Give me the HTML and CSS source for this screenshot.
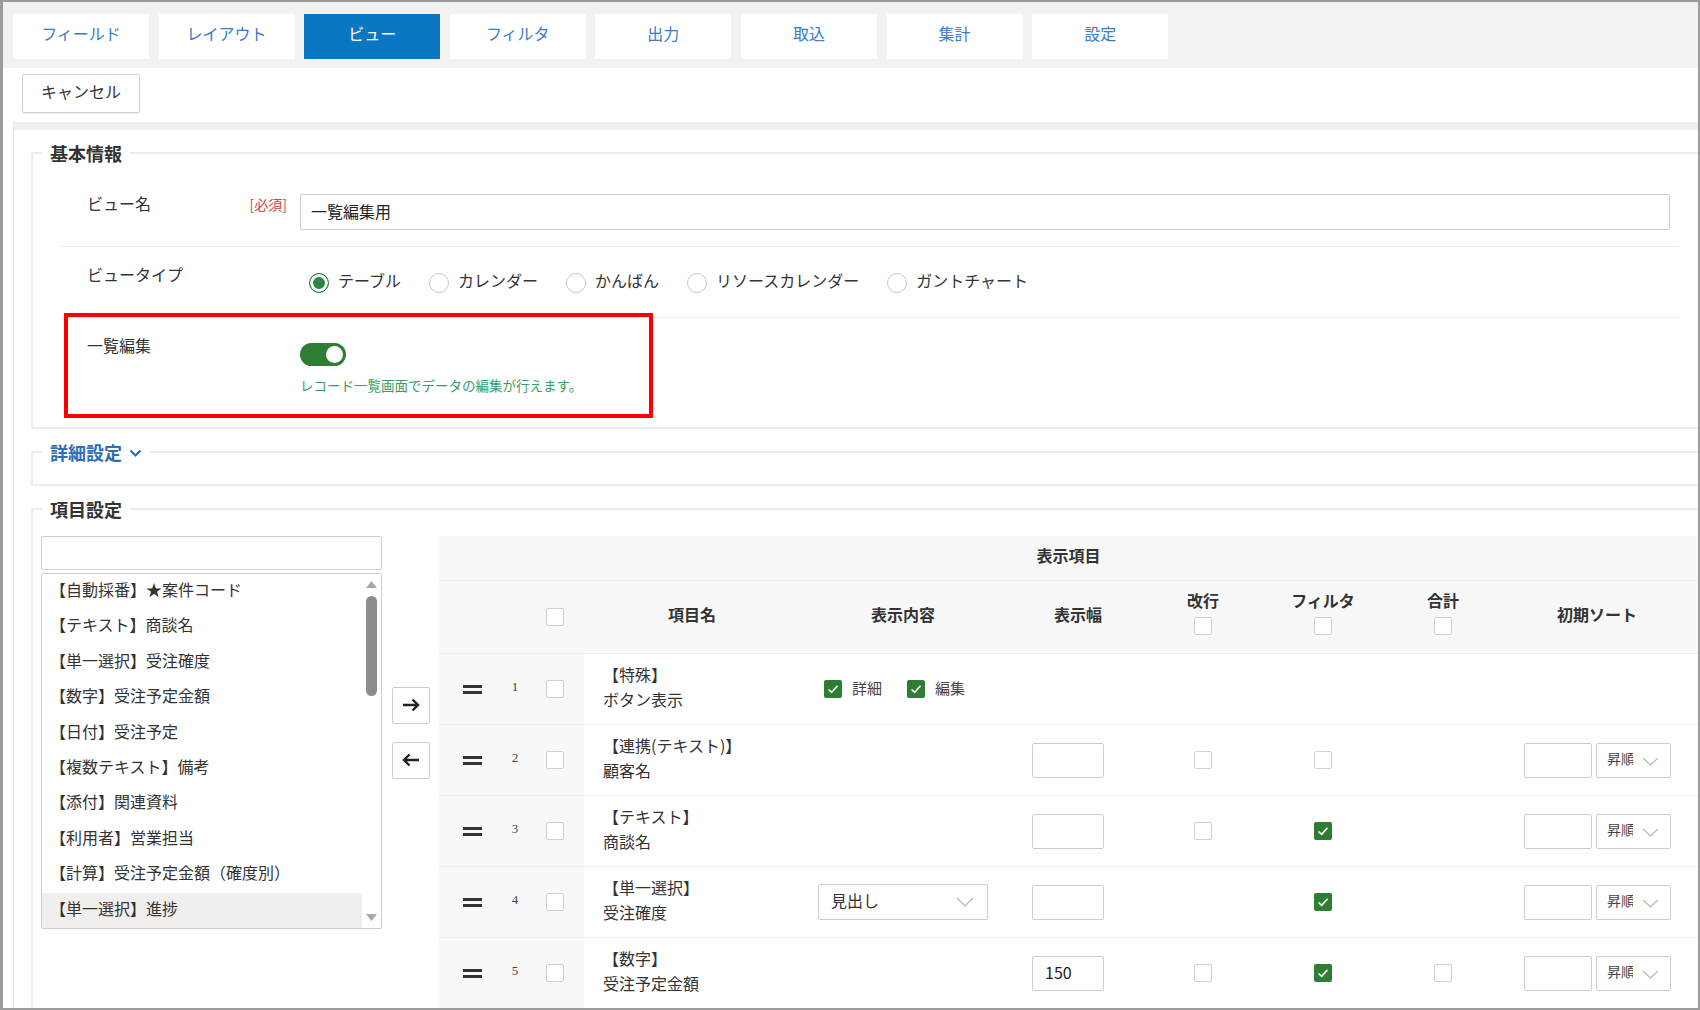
FILE: index.html
```html
<!DOCTYPE html>
<html lang="ja">
<head>
<meta charset="utf-8">
<title>ビュー設定</title>
<link rel="stylesheet" href="styles.css">
</head>
<body>
<div class="window">
  <nav class="tabs">
    <div class="tab">フィールド</div>
    <div class="tab">レイアウト</div>
    <div class="tab active">ビュー</div>
    <div class="tab">フィルタ</div>
    <div class="tab">出力</div>
    <div class="tab">取込</div>
    <div class="tab">集計</div>
    <div class="tab">設定</div>
  </nav>
  <div class="toolbar"><button class="btn">キャンセル</button></div>

  <div class="panel">
    <fieldset class="group">
      <legend>基本情報</legend>
      <div class="frow name">
        <div class="flabel"><span>ビュー名</span><span class="req">[必須]</span></div>
        <div class="fcontent"><input class="text" type="text" value="一覧編集用"></div>
      </div>
      <div class="frow type">
        <div class="flabel"><span>ビュータイプ</span></div>
        <div class="fcontent">
          <div class="radios">
            <label class="ropt"><span class="radio on"></span><span class="rtext">テーブル</span></label>
            <label class="ropt"><span class="radio"></span><span class="rtext">カレンダー</span></label>
            <label class="ropt"><span class="radio"></span><span class="rtext">かんばん</span></label>
            <label class="ropt"><span class="radio"></span><span class="rtext">リソースカレンダー</span></label>
            <label class="ropt"><span class="radio"></span><span class="rtext">ガントチャート</span></label>
          </div>
        </div>
      </div>
      <div class="frow bulk">
        <div class="flabel"><span>一覧編集</span></div>
        <div class="fcontent">
          <div class="toggle"><span class="knob"></span></div>
          <p class="help">レコード一覧画面でデータの編集が行えます。</p>
        </div>
        <div class="annot"></div>
      </div>
    </fieldset>

    <fieldset class="group">
      <legend class="link">詳細設定<svg class="chev" width="13" height="9" viewBox="0 0 13 9"><path d="M1.5 1.5 L6.5 6.5 L11.5 1.5" fill="none" stroke="#2f6db5" stroke-width="2.2"/></svg></legend>
      <div class="collapsed"></div>
    </fieldset>

    <fieldset class="group">
      <legend>項目設定</legend>
      <div class="items">
        <div class="picker">
          <div class="leftcol">
            <input class="search" type="text" value="">
            <div class="list">
              <ul class="opts">
                <li>【自動採番】★案件コード</li>
                <li>【テキスト】商談名</li>
                <li>【単一選択】受注確度</li>
                <li>【数字】受注予定金額</li>
                <li>【日付】受注予定</li>
                <li>【複数テキスト】備考</li>
                <li>【添付】関連資料</li>
                <li>【利用者】営業担当</li>
                <li>【計算】受注予定金額（確度別）</li>
                <li class="sel">【単一選択】進捗</li>
              </ul>
              <div class="sbar">
                <svg width="11" height="7" viewBox="0 0 11 7"><polygon points="5.5,0 11,7 0,7" fill="#a8a8a8"/></svg>
                <span class="thumb"></span>
                <span class="sfill"></span>
                <svg width="11" height="7" viewBox="0 0 11 7"><polygon points="0,0 11,0 5.5,7" fill="#a8a8a8"/></svg>
              </div>
            </div>
          </div>
          <div class="movebtns">
            <button class="mbtn"><svg width="18" height="14" viewBox="0 0 18 14"><path d="M1 7 H16 M10.5 1.5 L16 7 L10.5 12.5" fill="none" stroke="#222" stroke-width="2.4"/></svg></button>
            <button class="mbtn"><svg width="18" height="14" viewBox="0 0 18 14"><path d="M17 7 H2 M7.5 1.5 L2 7 L7.5 12.5" fill="none" stroke="#222" stroke-width="2.4"/></svg></button>
          </div>
        </div>

        <div class="tbl">
          <div class="tr h1"><div class="th span">表示項目</div></div>
          <div class="tr h2">
            <div class="td"></div>
            <div class="td"></div>
            <div class="td c"><span class="cb"></span></div>
            <div class="td c th">項目名</div>
            <div class="td c th">表示内容</div>
            <div class="td c th">表示幅</div>
            <div class="td c th stack"><span class="slabel">改行</span><span class="cb"></span></div>
            <div class="td c th stack"><span class="slabel">フィルタ</span><span class="cb"></span></div>
            <div class="td c th stack"><span class="slabel">合計</span><span class="cb"></span></div>
            <div class="td c th">初期ソート</div>
            <div class="td"></div>
          </div>

          <div class="tr">
            <div class="td g c"><span class="handle"></span></div>
            <div class="td g c num">1</div>
            <div class="td g c"><span class="cb"></span></div>
            <div class="td nm">【特殊】<br>ボタン表示</div>
            <div class="td disp"><span class="chk"><span class="cb on"><svg width="18" height="18" viewBox="0 0 18 18"><path d="M4.5 9.5 L7.7 12.4 L13.5 5.8" fill="none" stroke="#fff" stroke-width="1.6"/></svg></span><span class="ctext">詳細</span></span><span class="chk"><span class="cb on"><svg width="18" height="18" viewBox="0 0 18 18"><path d="M4.5 9.5 L7.7 12.4 L13.5 5.8" fill="none" stroke="#fff" stroke-width="1.6"/></svg></span><span class="ctext">編集</span></span></div>
            <div class="td"></div>
            <div class="td"></div>
            <div class="td"></div>
            <div class="td"></div>
            <div class="td"></div>
            <div class="td"></div>
          </div>

          <div class="tr">
            <div class="td g c"><span class="handle"></span></div>
            <div class="td g c num">2</div>
            <div class="td g c"><span class="cb"></span></div>
            <div class="td nm">【連携(テキスト)】<br>顧客名</div>
            <div class="td"></div>
            <div class="td wd"><input class="small" type="text" value=""></div>
            <div class="td c"><span class="cb"></span></div>
            <div class="td c"><span class="cb"></span></div>
            <div class="td"></div>
            <div class="td sort"><input class="sinput" type="text" value=""><div class="sselect"><span class="stext">昇順</span><svg width="17" height="9" viewBox="0 0 17 9"><path d="M1 1 L8.5 8 L16 1" fill="none" stroke="#b5b5b5" stroke-width="1.1"/></svg></div></div>
            <div class="td"></div>
          </div>

          <div class="tr">
            <div class="td g c"><span class="handle"></span></div>
            <div class="td g c num">3</div>
            <div class="td g c"><span class="cb"></span></div>
            <div class="td nm">【テキスト】<br>商談名</div>
            <div class="td"></div>
            <div class="td wd"><input class="small" type="text" value=""></div>
            <div class="td c"><span class="cb"></span></div>
            <div class="td c"><span class="cb on"><svg width="18" height="18" viewBox="0 0 18 18"><path d="M4.5 9.5 L7.7 12.4 L13.5 5.8" fill="none" stroke="#fff" stroke-width="1.6"/></svg></span></div>
            <div class="td"></div>
            <div class="td sort"><input class="sinput" type="text" value=""><div class="sselect"><span class="stext">昇順</span><svg width="17" height="9" viewBox="0 0 17 9"><path d="M1 1 L8.5 8 L16 1" fill="none" stroke="#b5b5b5" stroke-width="1.1"/></svg></div></div>
            <div class="td"></div>
          </div>

          <div class="tr">
            <div class="td g c"><span class="handle"></span></div>
            <div class="td g c num">4</div>
            <div class="td g c"><span class="cb"></span></div>
            <div class="td nm">【単一選択】<br>受注確度</div>
            <div class="td dsel"><div class="select"><span class="seltext">見出し</span><svg width="18" height="10" viewBox="0 0 18 10"><path d="M1 1 L9 9 L17 1" fill="none" stroke="#b5b5b5" stroke-width="1.1"/></svg></div></div>
            <div class="td wd"><input class="small" type="text" value=""></div>
            <div class="td"></div>
            <div class="td c"><span class="cb on"><svg width="18" height="18" viewBox="0 0 18 18"><path d="M4.5 9.5 L7.7 12.4 L13.5 5.8" fill="none" stroke="#fff" stroke-width="1.6"/></svg></span></div>
            <div class="td"></div>
            <div class="td sort"><input class="sinput" type="text" value=""><div class="sselect"><span class="stext">昇順</span><svg width="17" height="9" viewBox="0 0 17 9"><path d="M1 1 L8.5 8 L16 1" fill="none" stroke="#b5b5b5" stroke-width="1.1"/></svg></div></div>
            <div class="td"></div>
          </div>

          <div class="tr">
            <div class="td g c"><span class="handle"></span></div>
            <div class="td g c num">5</div>
            <div class="td g c"><span class="cb"></span></div>
            <div class="td nm">【数字】<br>受注予定金額</div>
            <div class="td"></div>
            <div class="td wd"><input class="small" type="text" value="150"></div>
            <div class="td c"><span class="cb"></span></div>
            <div class="td c"><span class="cb on"><svg width="18" height="18" viewBox="0 0 18 18"><path d="M4.5 9.5 L7.7 12.4 L13.5 5.8" fill="none" stroke="#fff" stroke-width="1.6"/></svg></span></div>
            <div class="td c"><span class="cb"></span></div>
            <div class="td sort"><input class="sinput" type="text" value=""><div class="sselect"><span class="stext">昇順</span><svg width="17" height="9" viewBox="0 0 17 9"><path d="M1 1 L8.5 8 L16 1" fill="none" stroke="#b5b5b5" stroke-width="1.1"/></svg></div></div>
            <div class="td"></div>
          </div>
        </div>
      </div>
    </fieldset>
  </div>
</div>
</body>
</html>
```

FILE: styles.css
```css
html, body {
  margin: 0;
  padding: 0;
  height: 1010px;
  overflow: hidden;
  background: #fff;
}
body {
  font-family: "Noto Sans CJK JP", "Noto Sans", sans-serif;
  font-size: 16px;
  color: #333;
  line-height: 1.4;
}
* { box-sizing: border-box; }

.window {
  width: 1700px;
  height: 1010px;
  border: 2px solid #9c9c9c;
  border-left-width: 3px;
  overflow: hidden;
  background: #fff;
}

/* tabs */
.tabs {
  display: flex;
  gap: 9.6px;
  padding: 12px 0 9px 10px;
  background: #f2f2f2;
}
.tab {
  width: 136px;
  height: 45px;
  flex: none;
  display: flex;
  align-items: center;
  justify-content: center;
  padding-bottom: 6px;
  background: #fff;
  color: #3b7bc8;
  font-size: 16px;
}
.tab.active {
  background: #0b76c1;
  color: #fff;
}

/* toolbar */
.toolbar {
  height: 54px;
  padding: 6px 0 0 19px;
  background: #fff;
}
.btn {
  width: 118px;
  height: 39px;
  border: 1px solid #cfcfcf;
  border-radius: 2px;
  background: #fff;
  font: inherit;
  font-size: 16px;
  color: #333;
  box-shadow: 0 1px 1px rgba(0,0,0,0.08);
  padding: 0 0 4px 0;
}

/* panel */
.panel {
  box-sizing: content-box;
  margin-left: 10px;
  width: 1680px;
  border-top: 8px solid #f0f0f0;
  border-left: 1px solid #e3e3e3;
  padding: 11px 3px 0 17px;
}
.group {
  margin: 0;
  padding: 0;
  border: 2px solid #ececec;
  min-width: 0;
}
.group + .group { margin-top: 11px; }
.group > legend {
  margin-left: 9px;
  padding: 0 8px;
  font-size: 18px;
  font-weight: bold;
  line-height: 24px;
  color: #333;
}
.group > legend.link {
  color: #2f6db5;
  display: flex;
  align-items: center;
  gap: 7px;
}
.chev { display: block; margin-top: 2px; }
.collapsed { height: 20px; }

/* form rows */
.frow {
  position: relative;
  display: grid;
  grid-template-columns: 240px 1fr;
  margin: 0 30px 0 27px;
  border-bottom: 1px solid #ececec;
}
.frow.name { padding: 29px 9px 16px 0; }
.frow.type { padding: 18px 0 23px 0; }
.frow.bulk { padding: 18px 0 32px 0; border-bottom: none; }
.flabel {
  display: flex;
  justify-content: space-between;
  align-items: flex-start;
  padding: 0 13px 0 27px;
  line-height: 20px;
  font-size: 16px;
  color: #333;
}
.flabel span:first-child { margin-top: -1px; }
.req {
  color: #cc4646;
  font-size: 14px;
}
.text {
  width: 100%;
  height: 36px;
  border: 1px solid #cdcdcd;
  border-radius: 2px;
  padding: 0 10px 3px;
  font: inherit;
  font-size: 16px;
  color: #222;
  display: block;
}
.radios {
  display: flex;
  align-items: center;
  margin: 7px 0 0 9px;
  height: 22px;
  font-size: 16px;
  color: #333;
}
.ropt {
  display: flex;
  align-items: center;
  gap: 9px;
  margin-right: 28px;
  line-height: 22px;
}
.rtext { padding-bottom: 6px; }
.radio {
  width: 20px;
  height: 20px;
  border: 1px solid #c8c8c8;
  border-radius: 50%;
  background: #fff;
  flex: none;
}
.radio.on {
  border: 1.5px solid #2e8540;
  background: #2e8540;
  box-shadow: inset 0 0 0 3px #fff;
}
.toggle {
  width: 46px;
  height: 23px;
  margin-top: 7px;
  border-radius: 12px;
  background: #2e7d32;
  display: flex;
  align-items: center;
  justify-content: flex-end;
  padding-right: 3px;
}
.knob {
  width: 17px;
  height: 17px;
  border-radius: 50%;
  background: #fff;
}
.help {
  margin: 9px 0 0 0;
  font-size: 13.5px;
  line-height: 20px;
  color: #34a065;
}
.annot {
  position: absolute;
  top: -5px;
  left: 4px;
  width: 589px;
  height: 105px;
  border: 4px solid #ff0000;
  pointer-events: none;
}

/* items */
.items {
  display: flex;
  align-items: flex-start;
  padding: 15px 0 0 8px;
}
.picker {
  display: flex;
  align-items: center;
  flex: none;
}
.leftcol { width: 341px; }
.search {
  display: block;
  width: 341px;
  height: 34px;
  border: 1px solid #cdcdcd;
  border-radius: 2px;
  margin: 0 0 3px 0;
  font: inherit;
}
.list {
  display: flex;
  height: 356px;
  border: 1px solid #cdcdcd;
  border-radius: 2px;
  overflow: hidden;
}
.opts {
  list-style: none;
  margin: 0;
  padding: 0;
  flex: 1;
}
.opts li {
  height: 35.4px;
  line-height: 31px;
  padding-left: 8px;
  font-size: 16px;
  color: #333;
  white-space: nowrap;
}
.opts li.sel { background: #f0efed; }
.sbar {
  width: 19px;
  flex: none;
  display: flex;
  flex-direction: column;
  align-items: center;
  padding: 7px 0 7px;
}
.sbar svg { display: block; flex: none; }
.thumb {
  width: 11px;
  height: 100px;
  margin-top: 8px;
  border-radius: 6px;
  background: #8c8c8c;
}
.sfill { flex: 1; }
.movebtns {
  display: flex;
  flex-direction: column;
  gap: 18px;
  margin-left: 10px;
}
.mbtn {
  width: 38px;
  height: 37px;
  border: 1px solid #cdcdcd;
  border-radius: 2px;
  background: #fff;
  padding: 0;
  display: flex;
  align-items: center;
  justify-content: center;
}
.mbtn svg { display: block; }

/* table */
.tbl {
  flex: 1;
  margin-left: 9px;
  min-width: 0;
}
.tr {
  display: grid;
  grid-template-columns: 66px 20px 59px 216px 206px 144px 106px 134px 106px 202px 1fr;
  height: 71px;
  border-bottom: 1px solid #eeeeee;
}
.tr.h1 {
  height: 45px;
  background: #f8f8f8;
}
.tr.h2 {
  height: 73px;
  background: #f8f8f8;
}
.th {
  font-weight: bold;
  font-size: 16px;
  color: #333;
  padding-bottom: 6px;
}
.th.span {
  grid-column: 1 / 11;
  display: flex;
  align-items: center;
  justify-content: center;
}
.td {
  display: flex;
  align-items: center;
  min-width: 0;
}
.td.c { justify-content: center; }
.td.g { background: #f8f8f8; }
.td.stack {
  flex-direction: column;
  justify-content: center;
  gap: 1px;
  padding-bottom: 9px;
}
.slabel {
  line-height: 20px;
  padding-bottom: 6px;
}
.num {
  font-family: "Liberation Serif", serif;
  font-size: 13px;
  color: #444;
  padding-bottom: 4px;
}
.handle {
  width: 19px;
  height: 9px;
  border-top: 3px solid #333;
  border-bottom: 3px solid #333;
}
.cb {
  width: 18px;
  height: 18px;
  border: 1px solid #cfcfcf;
  border-radius: 2px;
  background: #fff;
  flex: none;
  display: block;
}
.cb.on {
  border: none;
  background: #2e7d32;
}
.cb svg { display: block; }
.nm {
  padding: 0 0 5px 19px;
  line-height: 25px;
  font-size: 16px;
  color: #333;
}
.disp { padding-left: 24px; }
.chk {
  display: flex;
  align-items: center;
  gap: 10px;
  margin-right: 25px;
  font-size: 15px;
  color: #444;
}
.ctext { padding-bottom: 4px; }
.dsel { padding-left: 18px; }
.select {
  width: 170px;
  height: 36px;
  border: 1px solid #cdcdcd;
  border-radius: 2px;
  display: flex;
  align-items: center;
  justify-content: space-between;
  padding: 0 13px 0 12px;
  font-size: 16px;
  color: #333;
}
.seltext { padding-bottom: 4px; }
.select svg { display: block; }
.wd { padding-left: 26px; }
.small {
  width: 72px;
  height: 35px;
  border: 1px solid #cdcdcd;
  border-radius: 2px;
  padding: 0 12px 2px;
  font: inherit;
  font-size: 16px;
  color: #222;
}
.sort {
  padding-left: 28px;
  gap: 4px;
}
.sinput {
  width: 68px;
  height: 35px;
  border: 1px solid #cdcdcd;
  border-radius: 2px;
  font: inherit;
  flex: none;
}
.sselect {
  width: 75px;
  height: 35px;
  border: 1px solid #cdcdcd;
  border-radius: 2px;
  display: flex;
  align-items: center;
  padding-left: 10px;
  flex: none;
}
.stext {
  width: 26px;
  overflow: hidden;
  white-space: nowrap;
  font-size: 14px;
  line-height: 20px;
  padding-bottom: 4px;
  color: #444;
}
.sselect svg { display: block; margin-left: 9px; margin-top: 3px; }
```
